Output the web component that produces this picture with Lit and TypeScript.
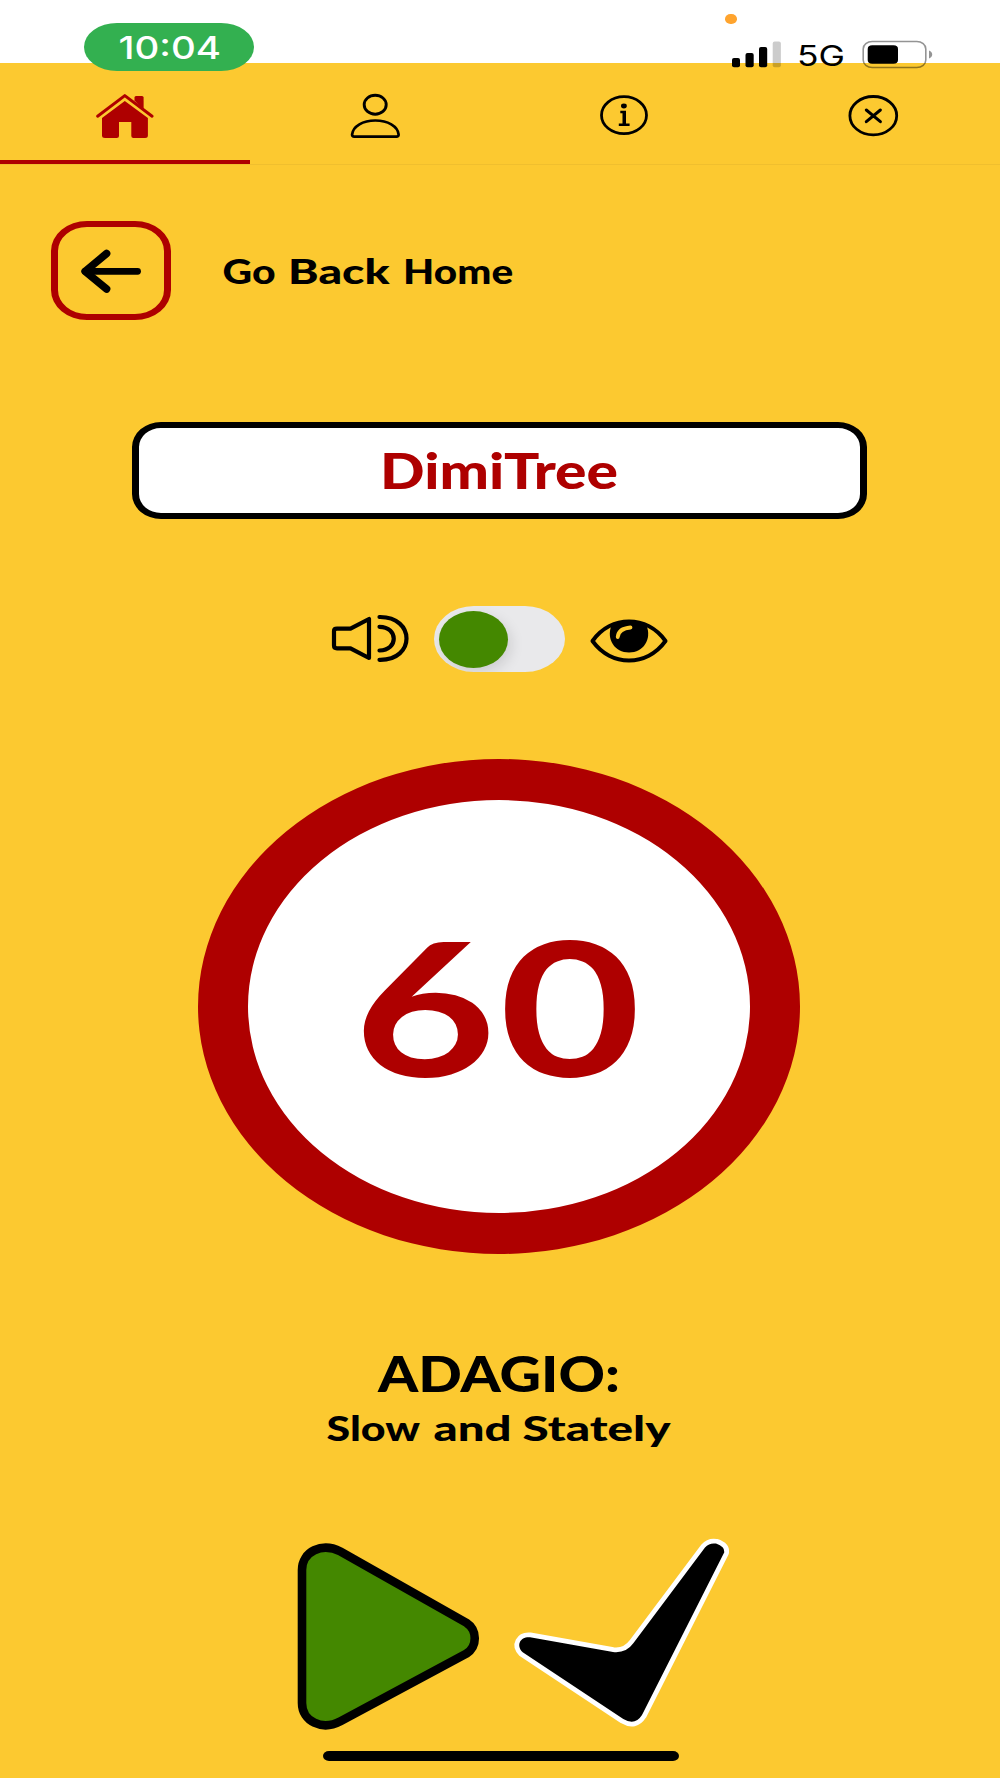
import { LitElement, html, svg, css } from "lit";
import { customElement, property } from "lit/decorators.js";

/** A word set at a fixed start and width: [text, x, width]. */
type Word = [string, number, number];

/** Line of wide display lettering; each word is stretched to its own measure. */
@customElement("wide-text")
export class WideText extends LitElement {
  @property({ attribute: false }) words: Word[] = [];
  @property() box = "0 0 100 20";
  @property({ type: Number }) baseline = 0;
  @property({ type: Number }) size = 16;

  static styles = css`
    :host { display: block; }
    .line { display: block; overflow: visible; fill: currentColor; font-family: inherit; font-weight: inherit; }
  `;

  render() {
    const [, , w, h] = this.box.split(" ");
    return html`<svg class="line" width=${w} height=${h} viewBox=${this.box}>
      ${this.words.map(
        ([t, x, len]) => svg`<text x=${x} y=${this.baseline} font-size=${this.size} textLength=${len} lengthAdjust="spacingAndGlyphs">${t}</text>`
      )}
    </svg>`;
  }
}

@customElement("app-root")
export class AppRoot extends LitElement {
  static styles = css`
    :host {
      display: flex;
      flex-direction: column;
      width: 1000px;
      height: 1778px;
      overflow: hidden;
      background: #fcc930;
      color: #000;
      font-family: Lato, "Liberation Sans", sans-serif;
      font-weight: 900;
    }
    * { box-sizing: border-box; }
    svg { display: block; overflow: visible; }
    .status {
      position: relative;
      z-index: 1;
      display: flex;
      justify-content: space-between;
      align-items: flex-start;
      flex: none;
      height: 63px;
      padding: 0 60px 0 84px;
      background: #fff;
      font-family: Inter, "Liberation Sans", sans-serif;
    }
    .clock { margin-top: 22.7px; width: 170px; height: 48px; border-radius: 33px / 24px; background: #33b050; color: #fff; font-weight: 500; }
    .signals { font-weight: 400; }
    .tabs {
      display: grid;
      grid-template-columns: repeat(4, 1fr);
      flex: none;
      height: 102px;
      border-bottom: 1px solid #f0bf2e;
    }
    .tab { display: flex; justify-content: center; padding-top: 27px; border-bottom: 4px solid transparent; }
    .tab.active { border-bottom-color: #ae0000; }
    .back { display: flex; flex: none; gap: 48px; margin: 56px 0 0 51.4px; height: 99px; }
    .back-button { flex: none; width: 120px; height: 99px; border: solid #ae0000; border-width: 6px 7px; border-radius: 36px / 30px; display: flex; align-items: center; justify-content: center; }
    .name {
      flex: none;
      width: 735px;
      height: 97px;
      margin: 102px 0 0 132px;
      border: solid #000;
      border-width: 6px 7px;
      border-radius: 29px / 25px;
      background: #fff;
      color: #ae0000;
    }
    .mode { display: flex; flex: none; align-items: center; gap: 24px; margin: 87px 0 0 330px; height: 66px; }
    .track { width: 131px; height: 66px; padding: 5px; border-radius: 40px / 33px; background: #e9e9eb; overflow: hidden; }
    .knob { width: 69px; height: 57px; border-radius: 50%; background: #448800; box-shadow: 3px 5px 14px rgba(0, 0, 0, 0.12); }
    .dial {
      flex: none;
      width: 602px;
      height: 495px;
      margin: 87px 0 0 198px;
      border: solid #ae0000;
      border-width: 41px 50px;
      border-radius: 50%;
      background: #fff;
      color: #ae0000;
      font-weight: 700;
    }
    .tempo { flex: none; margin: 86px 0 0 310px; }
    .actions { display: flex; flex: none; margin: 60px 0 0 290px; gap: 20px; }
    .home-bar { flex: none; width: 356px; height: 10px; margin: 11px 0 0 322.5px; border-radius: 6px / 5px; background: #000; }
  `;

  render() {
    return html`
      <header class="status">
        <div class="clock">
          <wide-text box="84 22.7 170 48" .baseline=${58.7} .size=${31.5} .words=${[["10:04", 118.5, 102.5]]}></wide-text>
        </div>
        <div class="signals">
          <svg width="210" height="72" viewBox="730 0 210 72">
            <rect x="725" y="14" width="12" height="10" rx="5.5" ry="4.8" fill="#ffa42e" />
            <rect x="732" y="58" width="8" height="9.3" rx="2" />
            <rect x="745.5" y="53" width="8.2" height="14.3" rx="2" />
            <rect x="759" y="47" width="8.2" height="20.3" rx="2" />
            <rect x="772.7" y="41.5" width="8.2" height="25.8" rx="2" fill="#000" opacity=".2" />
            <text x="797" y="66" font-size="28.3" textLength="48" lengthAdjust="spacingAndGlyphs">5G</text>
            <rect x="863.2" y="41.5" width="62.6" height="26" rx="9" ry="7.5" fill="none" stroke="#000" stroke-opacity=".42" stroke-width="1.6" />
            <rect x="867.7" y="45.3" width="30.3" height="18.5" rx="4.5" ry="3.7" />
            <path d="M929 50.5c4.300 1.500 4.300 6.500 0 8z" fill="#000" opacity=".42" />
          </svg>
        </div>
      </header>

      <nav class="tabs">
        <div class="tab active">
          <svg width="60" height="52" viewBox="95 90 60 52" fill="#ae0000">
            <path d="M97.600 116.200 L124.800 95.600 L152.100 116.200" fill="none" stroke="#ae0000" stroke-width="3" stroke-linecap="round" stroke-linejoin="round" />
            <path d="M134.500 100.500V97.500q0-1.500 1.500-1.500h6q1.600 0 1.600 1.500v12.500z" />
            <path d="M124.800 101 L147.900 118V135.500q0 2.500-2.800 2.500H133.500q-2.200 0-2.200-2V122H119V136q0 2-2.200 2H105q-3 0-3-2.500V118z" />
          </svg>
        </div>
        <div class="tab">
          <svg width="60" height="52" viewBox="345 90 60 52" fill="none" stroke="#000" stroke-width="2.900">
            <ellipse cx="375.200" cy="104.700" rx="11" ry="9.500" />
            <path d="M352.100 134.500C353 126 363 120.500 375.300 120.500S397.800 126 398.600 134.500Q398.700 136.600 396.500 136.600H354.200Q352 136.600 352.100 134.500z" stroke-width="2.700" />
          </svg>
        </div>
        <div class="tab">
          <svg width="60" height="52" viewBox="595 90 60 52">
            <ellipse cx="624" cy="115.200" rx="22.500" ry="18.500" fill="none" stroke="#000" stroke-width="2.800" />
            <ellipse cx="623.900" cy="106" rx="2.900" ry="2.400" />
            <path d="M620.300 110.800h5.700v12.700h3.600v2.400h-10.800v-2.400h3.700v-10.300h-2.200z" />
          </svg>
        </div>
        <div class="tab">
          <svg width="60" height="52" viewBox="845 90 60 52" fill="none" stroke="#000">
            <ellipse cx="873.300" cy="115.700" rx="23.400" ry="19.200" stroke-width="2.800" />
            <path d="M866.300 110l14.100 11.700M880.400 110l-14.100 11.700" stroke-width="3" stroke-linecap="round" />
          </svg>
        </div>
      </nav>

      <section class="back">
        <div class="back-button">
          <svg width="64" height="50" viewBox="79.900 245.500 64 50" fill="none" stroke="#000" stroke-width="6.700" stroke-linecap="round" stroke-linejoin="round">
            <path d="M138.500 270.800H86" />
            <path d="M107.500 253L86 270.800L107.500 288.500" stroke-width="7.500" />
            <path d="M87 268v5.500l7-2.700z" stroke-width="2" fill="#000" />
          </svg>
        </div>
        <wide-text box="219.400 221 300 99" .baseline=${284.2} .size=${34.500}
          .words=${[["Go", 223, 53], ["Back", 288.500, 101.500], ["Home", 403.500, 110]]}></wide-text>
      </section>

      <section class="name">
        <wide-text box="139 428 721 85" .baseline=${488.7} .size=${49} .words=${[["DimiTree", 380, 238]]}></wide-text>
      </section>

      <section class="mode">
        <svg width="80" height="66" viewBox="330 606 80 66" fill="none" stroke="#000" stroke-width="4.200" stroke-linecap="round" stroke-linejoin="round">
          <path d="M369 619V658L350.500 648.300H337Q334 648.300 334 645.500V631Q334 628.700 337 628.700H350.500z" />
          <path d="M379.500 626.800C398.500 627 398.500 650.500 379.500 650.500M379.500 617C415.500 616.500 415.500 660.500 379.500 659.800" />
        </svg>
        <div class="track"><div class="knob"></div></div>
        <svg width="80" height="66" viewBox="589 606 80 66">
          <path d="M592.500 641C611 615 647 615 665.500 641C646.500 667 611.500 667 592.500 641z" fill="none" stroke="#000" stroke-width="4" stroke-linejoin="round" />
          <path d="M611.500 625.500C620 621 638 621 646.500 625.500C652 639 643.500 652.500 629 652.500S606 639 611.500 625.500z" />
          <path d="M617.700 637Q618.500 628.500 630.500 627.500" fill="none" stroke="#fcc930" stroke-width="3.800" stroke-linecap="round" />
        </svg>
      </section>

      <section class="dial">
        <wide-text box="248 800 502 413" .baseline=${1076.8} .size=${185} .words=${[["6", 353.5, 143], ["0", 499, 142]]}></wide-text>
      </section>

      <section class="tempo">
        <wide-text box="310 1340 380 60" .baseline=${1391.5} .size=${48.500} .words=${[["ADAGIO:", 378, 242]]}></wide-text>
        <wide-text box="310 1400 380 60" .baseline=${1440.5} .size=${34.700}
          .words=${[["Slow", 326.500, 93.500], ["and", 433.500, 78], ["Stately", 522.500, 148]]}></wide-text>
      </section>

      <section class="actions">
        <svg width="200" height="220" viewBox="290 1520 200 220">
          <path d="M302 1570C302 1551.500 322 1542 340.500 1551.500L466.500 1622.800C477.500 1630 477.500 1646.500 466.500 1653.500L340.500 1721.300C322 1731 302 1721.500 302 1703z" fill="#448800" stroke="#000" stroke-width="8.600" />
        </svg>
        <svg width="220" height="220" viewBox="510 1520 220 220">
          <path d="M530 1637.300L613 1652Q626 1653.500 633.500 1643L705 1547.600Q709.500 1542.500 716 1543.600Q725 1546.500 724.300 1552.300Q680 1640 642 1715Q635 1726 623.300 1719L522.700 1652.300C515.500 1645 520.500 1636.500 530 1637.300z" stroke="#fff" stroke-width="9.500" stroke-linejoin="round" paint-order="stroke" />
        </svg>
      </section>
      <div class="home-bar"></div>
    `;
  }
}
